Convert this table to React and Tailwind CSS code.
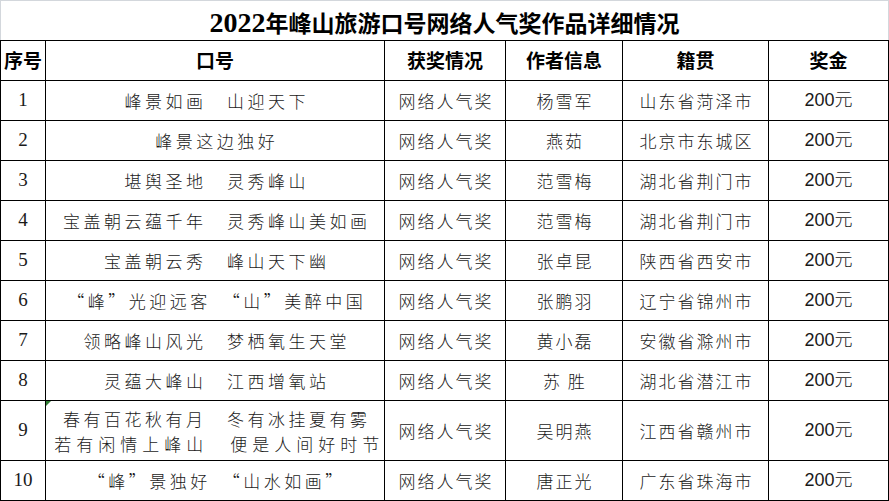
import React from "react";

const rows = [
  ["1", ["峰景如画　山迎天下"], "杨雪军", "山东省菏泽市"],
  ["2", ["峰景这边独好"], "燕茹", "北京市东城区"],
  ["3", ["堪舆圣地　灵秀峰山"], "范雪梅", "湖北省荆门市"],
  ["4", ["宝盖朝云蕴千年　灵秀峰山美如画"], "范雪梅", "湖北省荆门市"],
  ["5", ["宝盖朝云秀　峰山天下幽"], "张卓昆", "陕西省西安市"],
  ["6", ["“峰”光迎远客　“山”美醉中国"], "张鹏羽", "辽宁省锦州市"],
  ["7", ["领略峰山风光　梦栖氧生天堂"], "黄小磊", "安徽省滁州市"],
  ["8", ["灵蕴大峰山　江西增氧站"], "苏 胜", "湖北省潜江市"],
  ["9", ["春有百花秋有月　冬有冰挂夏有雾", "若有闲情上峰山　便是人间好时节"], "吴明燕", "江西省赣州市"],
  ["10", ["“峰”景独好　“山水如画”"], "唐正光", "广东省珠海市"],
];

const cjk = "font-['Noto_Sans_CJK_SC',sans-serif]";

export default function App() {
  return (
    <div className="w-[889px] h-[501px] bg-white overflow-hidden text-[#1a1a1a]">
      <div className="h-[40px] border-t border-l border-r border-[#d3d7dc] flex items-center justify-center pt-[4px] font-bold text-black text-[23px] font-['Liberation_Serif','Noto_Sans_CJK_SC',serif]">
        <span className="text-[28px] leading-none">2022</span>
        <span className={`${cjk} leading-none`}>年峰山旅游口号网络人气奖作品详细情况</span>
      </div>
      <div className="grid grid-cols-[45px_339px_121px_117px_146px_120px] border-t border-l border-black">
        {["序号", "口号", "获奖情况", "作者信息", "籍贯", "奖金"].map((h) => (
          <div
            key={h}
            className={`h-[40px] border-r border-b border-black flex items-center justify-center font-bold text-black text-[19px] ${cjk}`}
          >
            {h}
          </div>
        ))}
        {rows.map(([n, slogan, author, place]) => {
          const h = slogan.length > 1 ? "h-[60px]" : "h-[40px]";
          return (
            <React.Fragment key={n}>
              <div className={`${h} border-r border-b border-black flex items-center justify-center text-[19px] font-['Liberation_Serif',serif]`}>
                {n}
              </div>
              <div className={`${h} relative border-r border-b border-black flex flex-col items-center justify-center text-[17px] tracking-[3.5px] pl-[3.5px] leading-[25px] font-light ${cjk}`}>
                {n === "9" && (
                  <div className="absolute left-0 top-0 w-0 h-0 border-t-[5px] border-r-[5px] border-t-[#2e7d32] border-r-transparent" />
                )}
                {slogan.map((s, i) => (
                  <div key={s} className={i === 1 ? "whitespace-pre tracking-[5px] pl-[5px]" : "whitespace-pre"}>{s}</div>
                ))}
              </div>
              <div className={`${h} border-r border-b border-black flex items-center justify-center text-[17px] tracking-[2px] pl-[2px] font-light ${cjk}`}>
                网络人气奖
              </div>
              <div className={`${h} border-r border-b border-black flex items-center justify-center text-[17px] tracking-[2px] pl-[2px] font-light whitespace-pre ${cjk}`}>
                {author}
              </div>
              <div className={`${h} border-r border-b border-black flex items-center justify-center text-[17px] tracking-[2px] pl-[2px] font-light ${cjk}`}>
                {place}
              </div>
              <div className={`${h} border-r border-b border-black flex items-center justify-center text-[18px] font-['Liberation_Sans','Noto_Sans_CJK_SC',sans-serif]`}>
                200<span className="font-light">元</span>
              </div>
            </React.Fragment>
          );
        })}
      </div>
    </div>
  );
}
